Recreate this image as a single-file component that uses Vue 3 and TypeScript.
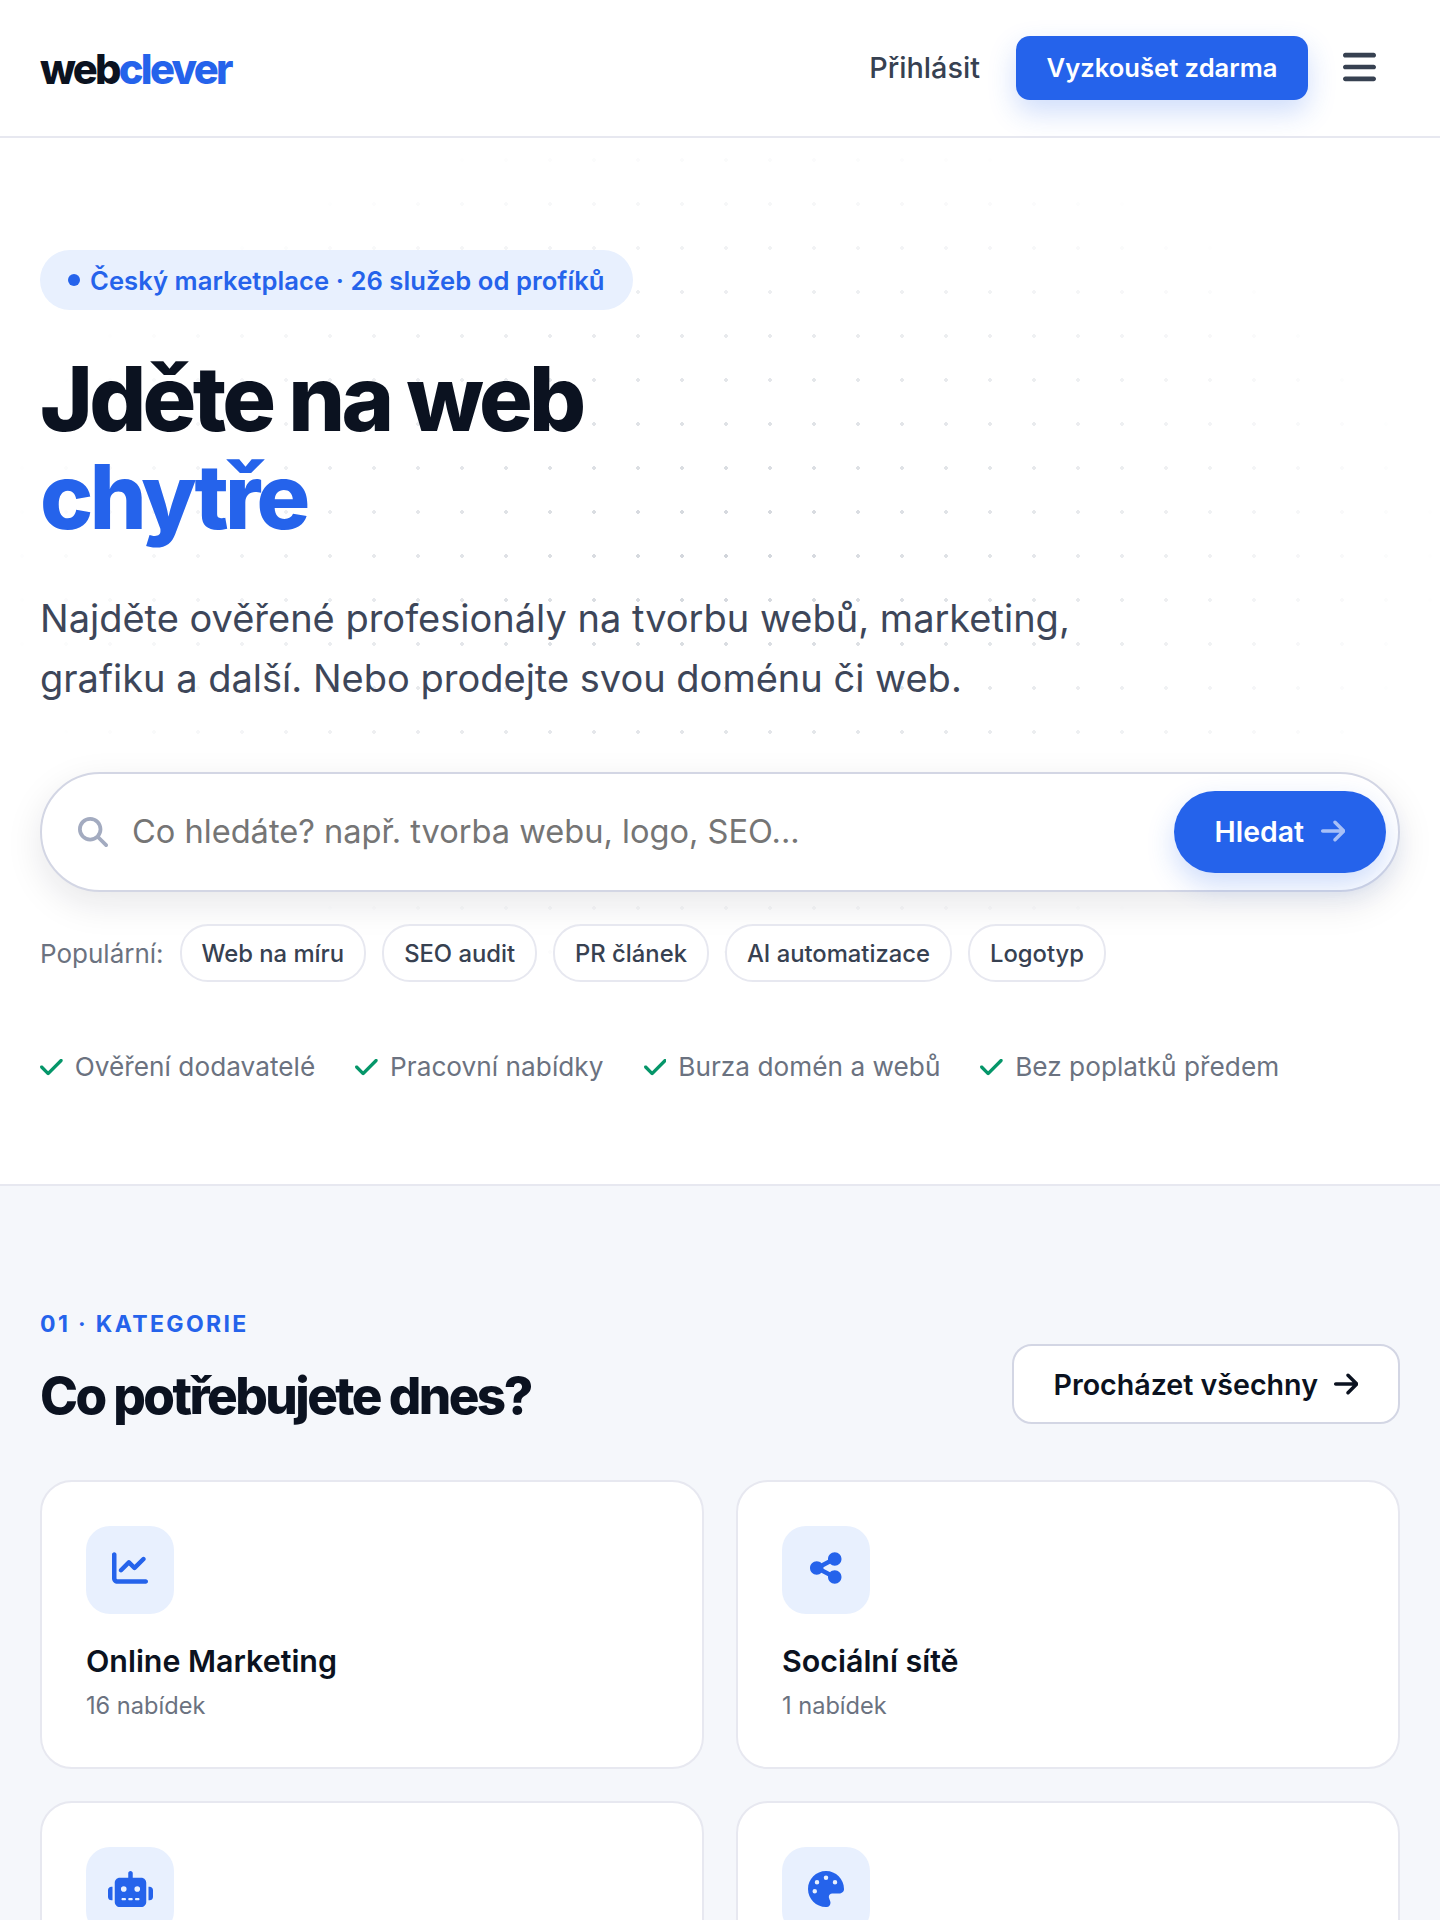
<template>
  <div class="page">
    <header class="topbar">
      <a class="logo">web<span>clever</span></a>
      <div class="topbar__actions">
        <a class="login">Přihlásit</a>
        <button type="button" class="try-btn">Vyzkoušet zdarma</button>
        <svg class="burger" viewBox="0 0 448 512"><path fill="currentColor" :d="icons.bars" /></svg>
      </div>
    </header>

    <section class="hero">
      <div class="hero__dots"></div>
      <div class="hero__inner">
        <div class="pill"><span class="pill__dot"></span>Český marketplace · 26 služeb od profíků</div>
        <h1>Jděte na web<br /><span>chytře</span></h1>
        <p class="lead">Najděte ověřené profesionály na tvorbu webů, marketing,<br />grafiku a další. Nebo prodejte svou doménu či web.</p>

        <div class="search">
          <svg class="search__icon" viewBox="0 0 512 512"><path fill="currentColor" :d="icons.search" /></svg>
          <span class="search__text">Co hledáte? např. tvorba webu, logo, SEO...</span>
          <button type="button" class="search__btn">
            Hledat
            <svg viewBox="0 0 448 512"><path fill="currentColor" :d="icons.arrow" /></svg>
          </button>
        </div>

        <div class="popular">
          <span class="popular__label">Populární:</span>
          <a v-for="tag in tags" :key="tag" class="tag">{{ tag }}</a>
        </div>

        <ul class="checks">
          <li v-for="check in checks" :key="check">
            <svg viewBox="0 0 448 512"><path fill="currentColor" :d="icons.check" /></svg>
            {{ check }}
          </li>
        </ul>
      </div>
    </section>

    <section class="cats">
      <div class="cats__head">
        <div>
          <p class="eyebrow">01 · KATEGORIE</p>
          <h2>Co potřebujete dnes?</h2>
        </div>
        <a class="all-btn">
          Procházet všechny
          <svg viewBox="0 0 448 512"><path fill="currentColor" :d="icons.arrow" /></svg>
        </a>
      </div>

      <div class="cats__grid">
        <article v-for="cat in categories" :key="cat.title" class="card">
          <div class="card__icon">
            <svg :viewBox="`0 0 ${cat.width} 512`" :style="{ width: `${(cat.width / 512) * 36}px` }">
              <path fill="currentColor" :d="cat.path" />
            </svg>
          </div>
          <h3>{{ cat.title }}</h3>
          <p>{{ cat.count }}</p>
        </article>
      </div>
    </section>
  </div>
</template>

<script setup lang="ts">
interface Category {
  title: string
  count: string
  width: number
  path: string
}

const tags: string[] = ['Web na míru', 'SEO audit', 'PR článek', 'AI automatizace', 'Logotyp']
const checks: string[] = ['Ověření dodavatelé', 'Pracovní nabídky', 'Burza domén a webů', 'Bez poplatků předem']

const icons = {
  bars: 'M0 96C0 78.3 14.3 64 32 64H416c17.7 0 32 14.3 32 32s-14.3 32-32 32H32C14.3 128 0 113.7 0 96zM0 256c0-17.7 14.3-32 32-32H416c17.7 0 32 14.3 32 32s-14.3 32-32 32H32c-17.7 0-32-14.3-32-32zM448 416c0 17.7-14.3 32-32 32H32c-17.7 0-32-14.3-32-32s14.3-32 32-32H416c17.7 0 32 14.3 32 32z',
  search: 'M416 208c0 45.9-14.9 88.3-40 122.7L502.6 457.4c12.5 12.5 12.5 32.8 0 45.3s-32.8 12.5-45.3 0L330.7 376c-34.4 25.2-76.8 40-122.7 40C93.1 416 0 322.9 0 208S93.1 0 208 0S416 93.1 416 208zM208 352a144 144 0 1 0 0-288 144 144 0 1 0 0 288z',
  arrow: 'M438.6 278.6c12.5-12.5 12.5-32.8 0-45.3l-160-160c-12.5-12.5-32.8-12.5-45.3 0s-12.5 32.8 0 45.3L338.8 224 32 224c-17.7 0-32 14.3-32 32s14.3 32 32 32l306.7 0L233.4 393.4c-12.5 12.5-12.5 32.8 0 45.3s32.8 12.5 45.3 0l160-160z',
  check: 'M438.6 105.4c12.5 12.5 12.5 32.8 0 45.3l-256 256c-12.5 12.5-32.8 12.5-45.3 0l-128-128c-12.5-12.5-12.5-32.8 0-45.3s32.8-12.5 45.3 0L160 338.7 393.4 105.4c12.5-12.5 32.8-12.5 45.3 0z'
}

const categories: Category[] = [
  {
    title: 'Online Marketing',
    count: '16 nabídek',
    width: 512,
    path: 'M64 64c0-17.7-14.3-32-32-32S0 46.3 0 64V400c0 44.2 35.8 80 80 80H480c17.7 0 32-14.3 32-32s-14.3-32-32-32H80c-8.8 0-16-7.2-16-16V64zm406.6 86.6c12.5-12.5 12.5-32.8 0-45.3s-32.8-12.5-45.3 0L320 210.7l-57.4-57.4c-12.5-12.5-32.8-12.5-45.3 0l-112 112c-12.5 12.5-12.5 32.8 0 45.3s32.8 12.5 45.3 0L240 221.3l57.4 57.4c12.5 12.5 32.8 12.5 45.3 0l128-128z'
  },
  {
    title: 'Sociální sítě',
    count: '1 nabídek',
    width: 448,
    path: 'M352 224c53 0 96-43 96-96s-43-96-96-96s-96 43-96 96c0 4 .2 8 .7 11.9l-94.1 47C145.4 170.2 121.9 160 96 160c-53 0-96 43-96 96s43 96 96 96c25.9 0 49.4-10.2 66.6-26.9l94.1 47c-.5 3.9-.7 7.8-.7 11.9c0 53 43 96 96 96s96-43 96-96s-43-96-96-96c-25.9 0-49.4 10.2-66.6 26.9l-94.1-47c.5-3.9 .7-7.8 .7-11.9s-.2-8-.7-11.9l94.1-47C302.6 213.8 326.1 224 352 224z'
  },
  {
    title: 'AI a automatizace',
    count: '3 nabídek',
    width: 640,
    path: 'M320 0c17.7 0 32 14.3 32 32V96H472c39.8 0 72 32.2 72 72V440c0 39.8-32.2 72-72 72H168c-39.8 0-72-32.2-72-72V168c0-39.8 32.2-72 72-72H288V32c0-17.7 14.3-32 32-32zM208 384c-8.8 0-16 7.2-16 16s7.2 16 16 16h32c8.8 0 16-7.2 16-16s-7.2-16-16-16H208zm96 0c-8.8 0-16 7.2-16 16s7.2 16 16 16h32c8.8 0 16-7.2 16-16s-7.2-16-16-16H304zm96 0c-8.8 0-16 7.2-16 16s7.2 16 16 16h32c8.8 0 16-7.2 16-16s-7.2-16-16-16H400zM264 256a40 40 0 1 0 -80 0 40 40 0 1 0 80 0zm152 40a40 40 0 1 0 0-80 40 40 0 1 0 0 80zM48 224H64V416H48c-26.5 0-48-21.5-48-48V272c0-26.5 21.5-48 48-48zm544 0c26.5 0 48 21.5 48 48v96c0 26.5-21.5 48-48 48H576V224h16z'
  },
  {
    title: 'Grafika a design',
    count: '2 nabídek',
    width: 512,
    path: 'M512 256c0 .9 0 1.8 0 2.7c-.4 36.5-33.6 61.3-70.1 61.3H344c-26.5 0-48 21.5-48 48c0 3.4 .4 6.7 1 9.9c2.1 10.2 6.5 20 10.8 29.9c6.1 13.8 12.1 27.5 12.1 42c0 31.8-21.6 60.7-53.4 62c-3.5 .1-7 .2-10.6 .2C114.6 512 0 397.4 0 256S114.6 0 256 0S512 114.6 512 256zM128 288a32 32 0 1 0 -64 0 32 32 0 1 0 64 0zm0-96a32 32 0 1 0 0-64 32 32 0 1 0 0 64zM288 96a32 32 0 1 0 -64 0 32 32 0 1 0 64 0zm96 96a32 32 0 1 0 0-64 32 32 0 1 0 0 64z'
  }
]
</script>

<style>
html,
body {
  margin: 0;
  background: #ffffff;
}
</style>

<style scoped>
.page {
  height: 1920px;
  overflow: hidden;
  font-family: Inter, 'Liberation Sans', sans-serif;
  color: #0b1220;
  background: #f5f7fb;
}

.topbar {
  height: 136px;
  display: flex;
  align-items: center;
  justify-content: space-between;
  padding: 0 40px;
  background: #ffffff;
  border-bottom: 2px solid #e7e8f0;
}

.logo {
  margin-top: 2px;
  font-size: 41.6px;
  font-weight: 800;
  letter-spacing: -2.7px;
  color: #0b1220;
}

.logo span {
  color: #2563eb;
}

.topbar__actions {
  display: flex;
  align-items: center;
}

.login {
  margin: 0 36px 2px 0;
  font-size: 28.8px;
  font-weight: 500;
  color: #374151;
}

.try-btn {
  width: 292px;
  height: 64px;
  padding: 0 0 2px;
  border: 0;
  border-radius: 14px;
  background: #2563eb;
  color: #ffffff;
  font: 600 25.6px Inter, sans-serif;
  box-shadow: 0 12px 28px rgba(37, 99, 235, 0.22);
}

.burger {
  width: 33px;
  height: 38px;
  margin: -2px 24px 0 35px;
  color: #374151;
}

.hero {
  position: relative;
  height: 1046px;
  background: #ffffff;
  border-bottom: 2px solid #e7e8f0;
}

.hero__dots {
  position: absolute;
  inset: 0;
  background-image: radial-gradient(circle, #d1d5db 1.6px, transparent 1.7px);
  background-size: 44px 44px;
  -webkit-mask-image: radial-gradient(ellipse 60% 50% at 50% 40%, #000 0%, transparent 84%);
  mask-image: radial-gradient(ellipse 60% 50% at 50% 40%, #000 0%, transparent 84%);
}

.hero__inner {
  position: relative;
  padding: 112px 40px 0;
}

.pill {
  display: inline-flex;
  align-items: center;
  gap: 10px;
  height: 60px;
  padding: 0 28px;
  border-radius: 30px;
  background: #e8f0fe;
  color: #2563eb;
  font-size: 25.6px;
  font-weight: 600;
  letter-spacing: 0.06px;
}

.pill__dot {
  width: 12px;
  height: 12px;
  border-radius: 50%;
  background: #2563eb;
}

h1 {
  margin: 40px 0 0;
  font-size: 89.6px;
  line-height: 98px;
  font-weight: 800;
  letter-spacing: -3.7px;
  color: #0b1220;
}

h1 span {
  color: #2563eb;
}

.lead {
  margin: 42px 0 0;
  font-size: 38px;
  line-height: 60px;
  color: #3d4659;
}

.search {
  margin-top: 64px;
  height: 116px;
  display: flex;
  align-items: center;
  padding: 0 12px 0 36px;
  border: 2px solid #d3d6e4;
  border-radius: 60px;
  background: #ffffff;
  box-shadow: 0 12px 36px rgba(15, 23, 42, 0.1);
}

.search__icon {
  width: 30px;
  height: 30px;
  color: #a3abc0;
  flex: none;
}

.search__text {
  flex: 1;
  margin: 0 0 2px 24px;
  font-size: 32.6px;
  color: #757575;
}

.search__btn {
  width: 212px;
  height: 82px;
  padding: 0 0 2px;
  border: 0;
  border-radius: 41px;
  background: #2563eb;
  color: #ffffff;
  font: 600 28.4px Inter, sans-serif;
  display: flex;
  align-items: center;
  justify-content: center;
  gap: 17px;
  box-shadow: 0 12px 28px rgba(37, 99, 235, 0.22);
}

.search__btn svg {
  width: 24.5px;
  height: 28px;
  opacity: 0.6;
}

.popular {
  margin-top: 32px;
  display: flex;
  align-items: center;
  gap: 16px;
}

.popular__label {
  font-size: 26px;
  color: #6b7280;
}

.tag {
  height: 54px;
  display: flex;
  align-items: center;
  padding: 0 20px;
  border: 2px solid #e7e8f0;
  border-radius: 28px;
  background: #ffffff;
  font-size: 23.8px;
  font-weight: 500;
  color: #374151;
}

.checks {
  list-style: none;
  margin: 69px 0 0;
  padding: 0;
  display: flex;
  gap: 40px;
}

.checks li {
  display: flex;
  align-items: center;
  gap: 12px;
  font-size: 26.2px;
  letter-spacing: 0.03px;
  color: #6b7280;
}

.checks svg {
  width: 22.75px;
  height: 26px;
  color: #059669;
}

.cats {
  padding: 123px 40px 0;
}

.cats__head {
  display: flex;
  align-items: flex-end;
  justify-content: space-between;
}

.eyebrow {
  margin: 0;
  font-size: 23.04px;
  line-height: 30px;
  font-weight: 700;
  letter-spacing: 2.35px;
  color: #2563eb;
}

h2 {
  margin: 22px 0 0;
  font-size: 51.2px;
  line-height: 68px;
  font-weight: 800;
  letter-spacing: -2.56px;
  color: #0b1220;
}

.all-btn {
  width: 388px;
  height: 80px;
  box-sizing: border-box;
  display: flex;
  align-items: center;
  justify-content: center;
  gap: 16px;
  margin-bottom: 5px;
  border: 2px solid #d3d6e4;
  border-radius: 20px;
  background: #ffffff;
  font-size: 28.6px;
  font-weight: 600;
}

.all-btn svg {
  width: 24.5px;
  height: 28px;
}

.cats__grid {
  margin-top: 51px;
  display: grid;
  grid-template-columns: 1fr 1fr;
  gap: 32px;
}

.card {
  height: 289px;
  box-sizing: border-box;
  padding: 44px;
  border: 2px solid #e7e8f0;
  border-radius: 32px;
  background: #ffffff;
}

.card__icon {
  width: 88px;
  height: 88px;
  border-radius: 24px;
  background: #e8f0fe;
  color: #2563eb;
  display: flex;
  align-items: center;
  justify-content: center;
}

.card__icon svg {
  height: 36px;
  margin-bottom: 5px;
}

.card h3 {
  margin: 27px 0 0;
  font-size: 30.4px;
  line-height: 40px;
  font-weight: 600;
  color: #0b1220;
}

.card p {
  margin: 8px 0 0;
  font-size: 23.6px;
  line-height: 34px;
  color: #6b7280;
}
</style>
